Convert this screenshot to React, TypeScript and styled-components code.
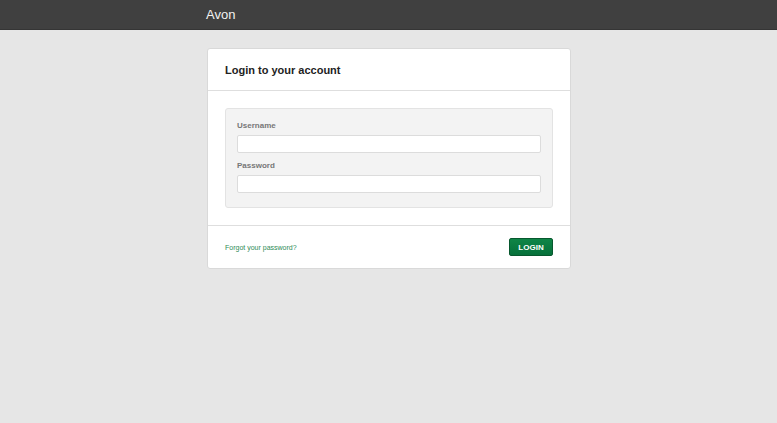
import styled, { createGlobalStyle } from "styled-components";

const GlobalStyle = createGlobalStyle`
    html, body {
        margin: 0;
        padding: 0;
        background: #e6e6e6;
        font-family: "Liberation Sans", Arial, sans-serif;
    }
    * { box-sizing: border-box; }
`

const TopBar = styled.div`
    height: 30px;
    background-color: #404040;
    border-bottom: 1px solid #353535;
    display: flex;
    align-items: center;
    padding-left: 206px;

    > span {
        color: #f2f2f2;
        font-size: 13px;
    }
`

const Page = styled.div`
    padding-top: 18px;
    min-height: 393px;
    padding-left: 207px;
`

const Card = styled.div`
    width: 364px;
    background: #fff;
    border: 1px solid #d9d9d9;
    border-radius: 3px;

    .header {
        height: 42px;
        display: flex;
        align-items: center;
        padding: 0 17px;
        border-bottom: 1px solid #dedede;
    }

    .header h2 {
        margin: 0;
        font-size: 11px;
        font-weight: bold;
        color: #222;
    }

    .body {
        padding: 17px 17px 17px;
        border-bottom: 1px solid #dedede;
    }

    .footer {
        height: 42px;
        display: flex;
        align-items: center;
        justify-content: space-between;
        padding: 0 17px;
    }
`

const Panel = styled.div`
    background: #f3f3f3;
    border: 1px solid #e3e3e3;
    border-radius: 3px;
    padding: 12px 11px 14px;
`

const Label = styled.label`
    display: block;
    font-size: 8px;
    font-weight: bold;
    color: #777;
    margin-bottom: 5px;
    margin-top: ${(p: { first?: boolean }) => (p.first ? "0" : "8px")};
`

const Input = styled.input`
    display: block;
    width: 304px;
    height: 18px;
    border: 1px solid #dcdcdc;
    border-radius: 2px;
    background: #fff;
    padding: 0 4px;
    font-size: 10px;
    outline: none;
`

const Forgot = styled.a`
    font-size: 7px;
    color: #2e8b57;
    text-decoration: none;
    cursor: pointer;
`

const LoginButton = styled.button`
    width: 44px;
    height: 18px;
    border: 1px solid #07582e;
    border-radius: 2px;
    background: linear-gradient(#0f8547, #06703a);
    color: #fff;
    font-family: "Liberation Sans", Arial, sans-serif;
    font-size: 8px;
    font-weight: bold;
    padding: 0;
    cursor: pointer;
`

const App = () => (
    <>
        <GlobalStyle />
        <TopBar>
            <span>Avon</span>
        </TopBar>
        <Page>
            <Card>
                <div className="header">
                    <h2>Login to your account</h2>
                </div>
                <div className="body">
                    <Panel>
                        <Label first>Username</Label>
                        <Input type="text" />
                        <Label>Password</Label>
                        <Input type="password" />
                    </Panel>
                </div>
                <div className="footer">
                    <Forgot>Forgot your password?</Forgot>
                    <LoginButton>LOGIN</LoginButton>
                </div>
            </Card>
        </Page>
    </>
)

export default App;
